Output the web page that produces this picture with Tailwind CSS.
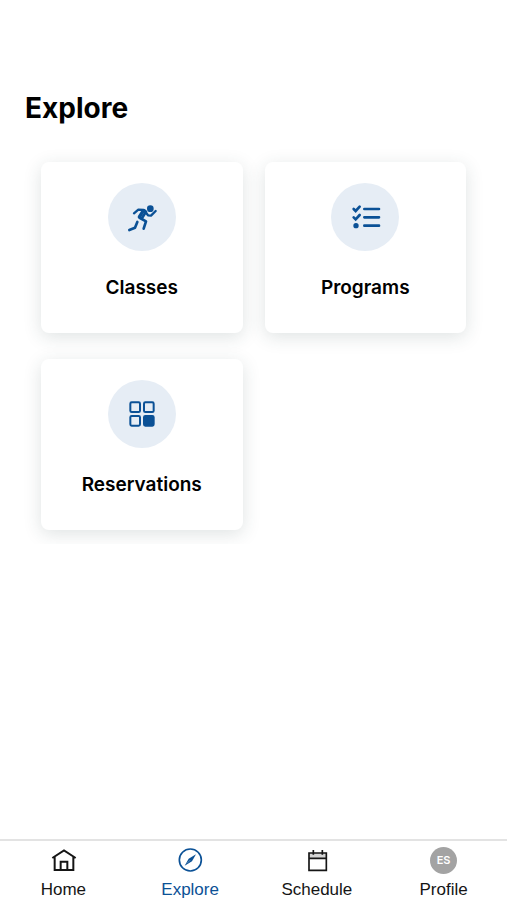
<!DOCTYPE html>
<html lang="en">
<head>
    <meta charset="UTF-8">
    <meta name="viewport" content="width=device-width, initial-scale=1.0">
    <title>Explore</title>
    <script src="https://cdn.jsdelivr.net/npm/@tailwindcss/browser@4"></script>
</head>
<body class="bg-white font-['Inter',sans-serif] text-black">
    <div class="min-h-screen flex flex-col">
        <main class="flex-1 pt-[89px]">
            <h1 class="px-[25px] text-[28px] leading-[38px] font-bold">Explore</h1>

            <div class="mt-[15px] px-[41px] pt-5 pb-[14px] grid grid-cols-2 gap-x-[22px] gap-y-[26px] overflow-hidden">
                <a href="#classes" class="h-[171px] rounded-lg bg-white shadow-[0_4px_18px_rgba(40,70,70,0.15)] flex flex-col items-center pt-[21px]">
                    <span class="size-[68px] rounded-full bg-[#e6edf5] flex items-center justify-center">
                        <svg class="size-8" viewBox="78 78 96 96" fill="none" stroke="#0b5196" stroke-width="7" stroke-linecap="round" stroke-linejoin="round">
                            <circle cx="151" cy="101" r="10" fill="#0b5196" stroke="none"/>
                            <path d="M102 115l13-11 16 1"/>
                            <path d="M130 107l-12 19" stroke-width="10"/>
                            <path d="M133 106l5 4-12 19" stroke-width="8"/>
                            <path d="M120 129l18 10-7 22" stroke-width="8"/>
                            <path d="M137 112l7 9 9 1 14-14"/>
                            <path d="M112 141l-7 17-17 7" stroke-width="8"/>
                        </svg>
                    </span>
                    <span class="mt-[25px] text-[19px] leading-6 font-semibold">Classes</span>
                </a>

                <a href="#programs" class="h-[171px] rounded-lg bg-white shadow-[0_4px_18px_rgba(40,70,70,0.15)] flex flex-col items-center pt-[21px]">
                    <span class="size-[68px] rounded-full bg-[#e6edf5] flex items-center justify-center">
                        <svg class="size-8" viewBox="119 78 96 96" fill="none" stroke="#0b5196" stroke-width="8" stroke-linecap="round">
                            <path d="M165 102h44M165 127h44M165 152h44"/>
                            <path d="M133 102l6 6 12-13M133 127l6 6 12-13" stroke-width="8"/>
                            <circle cx="140" cy="152" r="8" fill="#0b5196" stroke="none"/>
                        </svg>
                    </span>
                    <span class="mt-[25px] text-[19px] leading-6 font-semibold">Programs</span>
                </a>

                <a href="#reservations" class="h-[171px] rounded-lg bg-white shadow-[0_4px_18px_rgba(40,70,70,0.15)] flex flex-col items-center pt-[21px]">
                    <span class="size-[68px] rounded-full bg-[#e6edf5] flex items-center justify-center">
                        <svg class="size-8" viewBox="0 0 96 96" fill="none" stroke="#0b5196" stroke-width="6">
                            <rect x="13" y="13" width="29" height="29" rx="4"/>
                            <rect x="54" y="13" width="29" height="29" rx="4"/>
                            <rect x="13" y="54" width="29" height="29" rx="4"/>
                            <rect x="54" y="54" width="29" height="29" rx="4" fill="#0b5196"/>
                        </svg>
                    </span>
                    <span class="mt-[25px] text-[19px] leading-6 font-semibold">Reservations</span>
                </a>
            </div>
        </main>

        <nav class="h-[61px] border-t-2 border-[#e3e3e3] bg-white grid grid-cols-4 font-['Liberation_Sans',sans-serif] text-[17px] leading-5 text-[#151515]">
            <a href="#home" class="flex flex-col items-center pt-[5px]">
                <svg class="size-7" viewBox="0 0 84 84" fill="none" stroke="currentColor" stroke-width="6">
                    <path d="M10 36L45 13l35 23M17 33v39h56V33M35 72V47h20v25"/>
                </svg>
                <span class="mt-[6px]">Home</span>
            </a>
            <a href="#explore" aria-current="page" class="flex flex-col items-center pt-[5px] text-[#0b5196]">
                <svg class="size-7" viewBox="0 0 84 84" fill="none" stroke="currentColor" stroke-width="5">
                    <circle cx="43" cy="42" r="33"/>
                    <path d="M60 25L48 46 26 59l12-21z" fill="currentColor" stroke="none"/>
                    <path d="M43 42l-10 10" stroke="#fff" stroke-width="1"/>
                </svg>
                <span class="mt-[6px]">Explore</span>
            </a>
            <a href="#schedule" class="flex flex-col items-center pt-[5px]">
                <svg class="size-7" viewBox="0 0 84 84" fill="none" stroke="currentColor" stroke-width="5">
                    <path d="M18 21h52v16H18z" fill="#d4d4d4" stroke="none"/>
                    <path d="M18 21h52v52H18zM18 37h52M31 12v14M58 12v14"/>
                </svg>
                <span class="mt-[6px]">Schedule</span>
            </a>
            <a href="#profile" class="flex flex-col items-center pt-[5px]">
                <span class="size-7 flex items-center justify-center">
                    <span class="size-[27px] rounded-full bg-[#a3a3a3] text-white font-['Inter',sans-serif] text-[11px] font-semibold flex items-center justify-center">ES</span>
                </span>
                <span class="mt-[6px]">Profile</span>
            </a>
        </nav>
    </div>
</body>
</html>
